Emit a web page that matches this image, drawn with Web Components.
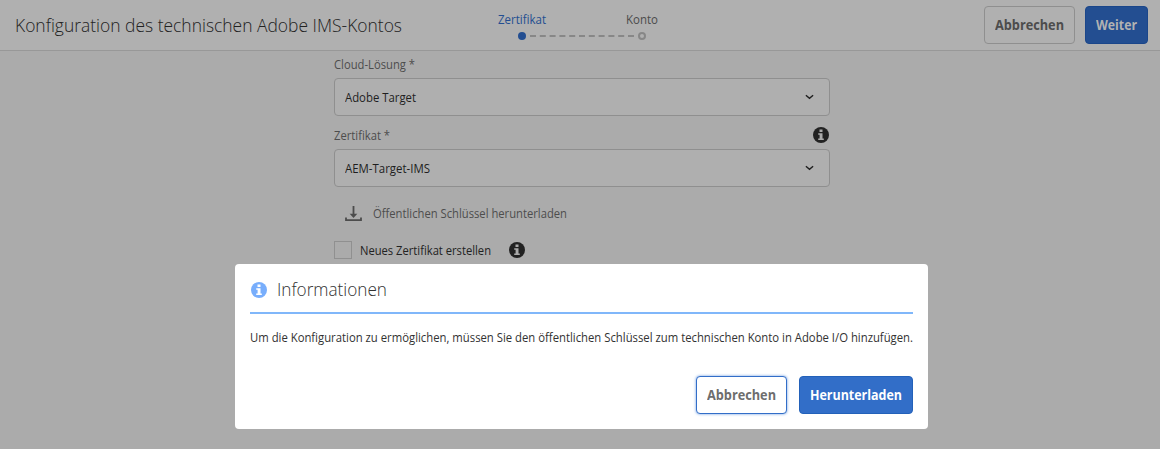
<!DOCTYPE html>
<html lang="de"><head><meta charset="utf-8"><title>Konfiguration</title>
<style>html,body{margin:0;height:100%;overflow:hidden;background:#ababab;font-family:"Open Sans","Noto Sans",sans-serif}</style></head>
<body><ims-page></ims-page>
<script>
class Base extends HTMLElement{
  constructor(){super();this.attachShadow({mode:'open'}).innerHTML=this.markup()}
  markup(){return ''}
}
// Single-line text condensed to fill a given width.
customElements.define('ui-text',class extends Base{
  markup(){return `<style>:host{display:block;white-space:nowrap;flex:none}span{display:inline-block;transform-origin:0 50%}</style><span><slot></slot></span>`}
  connectedCallback(){
    const s=this.shadowRoot.querySelector('span'),w=+this.getAttribute('w');
    this.style.width=w+'px';
    s.style.transform='scaleX('+w/s.getBoundingClientRect().width+')';
  }
});
customElements.define('info-icon',class extends Base{
  markup(){return `<style>:host{display:block;width:16px;height:16px;flex:none}svg{display:block}</style>
  <svg width="16" height="16" viewBox="0 0 16 16"><circle cx="8" cy="8" r="8" fill="currentColor"/><path fill="var(--hole,#ababab)" d="M6.5 2.4h3v2.5h-3zM5.2 6.2h4.3v5.2h1.3V13H5.2v-1.6h1.4V7.8H5.2z"/></svg>`}
});
customElements.define('ui-button',class extends Base{
  markup(){return `<style>:host{box-sizing:border-box;height:38px;display:flex;align-items:center;justify-content:center;border:1px solid #8f8f8f;border-radius:4px;font-size:13.5px;font-weight:700;color:#4c4c4c;flex:none}
  :host([kind=primary]){background:#234e91;border-color:#1b468a;color:#b2b2b2}
  :host([kind=cta]){background:#326ec8;border-color:#2361b9;color:#fff}
  :host([kind=focus]){border-color:#326ec8;box-shadow:0 0 3px #6a9ae0;color:#6d6d6d;background:#fff}</style><slot></slot>`}
});
customElements.define('ui-steps',class extends Base{
  markup(){return `<style>:host{display:block;width:164px;font-size:12px;color:#4b4b4b}.l{display:flex;justify-content:space-between;height:17px;line-height:17px;padding-right:4px}.on{color:#234e91}
  .d{display:flex;align-items:center;padding:4px 16px 0 20px;height:8px;gap:4px}.d i{box-sizing:border-box;width:8px;height:8px;border-radius:50%;background:#234e91;flex:none}.d i+svg+i{background:none;border:2px solid #878787}svg{display:block}</style>
  <div class="l"><ui-text class="on" w="48">Zertifikat</ui-text><ui-text w="32">Konto</ui-text></div>
  <div class="d"><i></i><svg width="104" height="2"><path d="M0 1h104" stroke="#878787" stroke-width="2" stroke-dasharray="6 3.8"/></svg><i></i></div>`}
});
customElements.define('app-header',class extends Base{
  markup(){return `<style>:host{box-sizing:border-box;height:51px;display:grid;grid-template-columns:498px 164px 1fr;background:#b0b0b0;border-bottom:1px solid #989898}
  .t{padding:11px 0 0 15px;font-size:17.5px;font-weight:300;line-height:28px;color:#222}ui-steps{padding-top:11px}.b{display:flex;justify-content:flex-end;gap:10px;padding:6px 12px 0 0}.a{width:91px}.w{width:63px}</style>
  <ui-text class="t" w="387">Konfiguration des technischen Adobe IMS-Kontos</ui-text><ui-steps></ui-steps>
  <div class="b"><ui-button class="a"><ui-text w="69">Abbrechen</ui-text></ui-button><ui-button class="w" kind="primary"><ui-text w="41">Weiter</ui-text></ui-button></div>`}
});
customElements.define('ui-select',class extends Base{
  markup(){return `<style>:host{box-sizing:border-box;display:flex;align-items:center;justify-content:space-between;width:496px;height:38px;border:1px solid #8f8f8f;border-radius:4px;background:#afafaf;padding:0 15px 0 9.5px;font-size:12px;color:#1e1e1e}svg{display:block}</style>
  <slot></slot><svg width="9" height="6" viewBox="0 0 9 6"><path d="M.9 1.3l3.6 3L8.1 1.3" fill="none" stroke="#1e1e1e" stroke-width="1.4"/></svg>`}
});
customElements.define('config-form',class extends Base{
  markup(){return `<style>:host{display:block;width:496px;margin-left:334px;font-size:12px;color:#4d4d4d}.l{display:flex;align-items:center;justify-content:space-between;box-sizing:border-box}
  .one{height:27px}.two{height:33px;padding:5px 1.5px 0 0}.dl{display:flex;align-items:center;height:52px;padding-left:11px;gap:10.5px}.dl svg{display:block}
  .ck{display:flex;align-items:center;height:22px;color:#222}.box{box-sizing:border-box;width:18px;height:18px;border:1px solid #909090;margin-right:7.5px}info-icon{color:#222}.ck info-icon{margin-left:18px}</style>
  <div class="l one"><ui-text w="81">Cloud-Lösung *</ui-text></div><ui-select><ui-text w="71">Adobe Target</ui-text></ui-select>
  <div class="l two"><ui-text w="56">Zertifikat *</ui-text><info-icon></info-icon></div><ui-select><ui-text w="85">AEM-Target-IMS</ui-text></ui-select>
  <div class="dl"><svg width="17" height="17" viewBox="0 0 17 17"><path d="M8.5 1v10M1 12.5V15.2h15v-2.7" fill="none" stroke="#4c4c4c" stroke-width="1.8"/><path d="M4.7 8.7h7.6L8.5 13z" fill="#4c4c4c"/></svg><ui-text w="194">Öffentlichen Schlüssel herunterladen</ui-text></div>
  <div class="ck"><div class="box"></div><ui-text w="131">Neues Zertifikat erstellen</ui-text><info-icon></info-icon></div>`}
});
customElements.define('info-dialog',class extends Base{
  markup(){return `<style>:host{position:absolute;left:235px;top:264px;box-sizing:border-box;width:693px;height:165px;background:#fff;border-radius:4px;padding:0 15px;--hole:#fff}
  .h{box-sizing:border-box;display:flex;align-items:center;height:50px;gap:10px;border-bottom:2px solid #80b7fa;font-size:17.5px;font-weight:300;color:#323232;padding:3px 0 0 1px}.h info-icon{color:#78aefc}.h ui-text{padding-bottom:2px}
  .m{font-size:12px;color:#323232;line-height:18px;padding:15px 0 29px}.f{display:flex;justify-content:flex-end;gap:12px}.a{width:91px}.d{width:114px}</style>
  <div class="h"><info-icon></info-icon><ui-text w="110">Informationen</ui-text></div>
  <div class="m"><ui-text w="663">Um die Konfiguration zu ermöglichen, müssen Sie den öffentlichen Schlüssel zum technischen Konto in Adobe I/O hinzufügen.</ui-text></div>
  <div class="f"><ui-button class="a" kind="focus"><ui-text w="69">Abbrechen</ui-text></ui-button><ui-button class="d" kind="cta"><ui-text w="92">Herunterladen</ui-text></ui-button></div>`}
});
customElements.define('ims-page',class extends Base{
  markup(){return `<style>:host{display:block;height:449px;position:relative}</style><app-header></app-header><config-form></config-form><info-dialog></info-dialog>`}
});
</script></body></html>
